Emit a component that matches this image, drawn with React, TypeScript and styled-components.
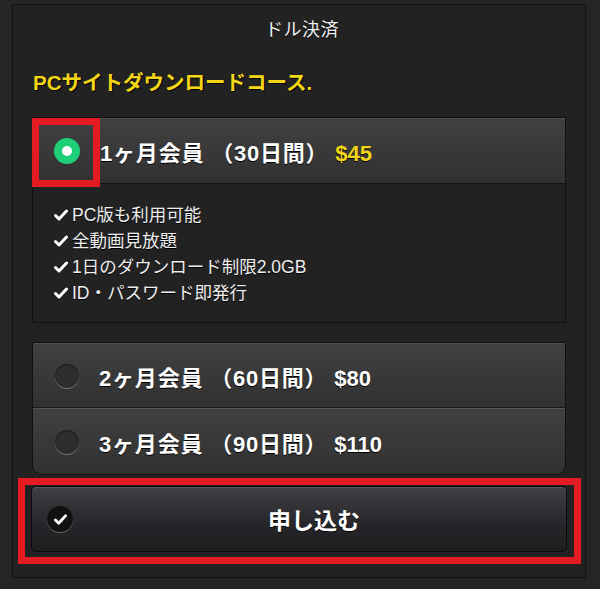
import React from "react";
import styled, { createGlobalStyle } from "styled-components";

const Global = createGlobalStyle`
  html, body { margin: 0; padding: 0; background: #252525; }
  body { font-family: "Liberation Sans", "Noto Sans CJK JP", sans-serif; }
`;

const Page = styled.div`
  width: 600px;
  height: 589px;
  padding: 4px 14px 0 12px;
  box-sizing: border-box;
`;

const Panel = styled.div`
  position: relative;
  height: 574px;
  box-sizing: border-box;
  border: 1px solid #121212;
  background: #222222;
  padding: 13px 19px 0 19px;
`;

const Title = styled.div`
  text-align: center;
  color: #eeeeee;
  font-size: 18px;
  line-height: 24px;
  letter-spacing: 0.5px;
  padding-left: 6px;
  text-shadow: 0 1px 0 #000;
`;

const Heading = styled.div`
  margin: 27px 0 0 1px;
  color: #f4d617;
  font-size: 20.5px;
  font-weight: bold;
  line-height: 28px;
  text-shadow: 1px 1px 0 #000;
`;

const Box = styled.div<{ $rounded?: boolean }>`
  margin-top: ${(p) => (p.$rounded ? "19px" : "20px")};
  border: 1px solid #111;
  border-radius: ${(p) => (p.$rounded ? "2px 2px 10px 10px" : "0")};
  overflow: hidden;
`;

const Row = styled.div<{ $h: number; $divider?: boolean }>`
  height: ${(p) => p.$h}px;
  box-sizing: border-box;
  display: flex;
  align-items: center;
  padding-left: 21px;
  gap: 20px;
  background: linear-gradient(#404040, #313131);
  border-top: 1px solid ${(p) => (p.$divider ? "#555" : "#505050")};
  box-shadow: ${(p) => (p.$divider ? "0 -1px 0 #1a1a1a" : "none")};
`;

const Label = styled.span`
  color: #ffffff;
  font-size: 22px;
  letter-spacing: 0.8px;
  font-weight: bold;
  text-shadow: 0 1px 0 #000;
  white-space: pre;
`;

const Price = styled.span<{ $hl?: boolean }>`
  color: ${(p) => (p.$hl ? "#f4d617" : "#ffffff")};
  letter-spacing: 0;
`;

const RadioOn = styled.span`
  width: 26px;
  height: 26px;
  border-radius: 50%;
  background: #1fcf78;
  display: flex;
  align-items: center;
  justify-content: center;
  flex: none;
  &::after {
    content: "";
    width: 10px;
    height: 10px;
    border-radius: 50%;
    background: #fff;
  }
`;

const RadioOff = styled.span`
  width: 24px;
  height: 24px;
  border-radius: 50%;
  background: #2e2e2e;
  box-shadow: inset 0 1px 2px rgba(0, 0, 0, 0.5), 0 1px 0 #777;
  flex: none;
  margin-left: 1px;
  margin-right: 0;
`;

const Features = styled.ul`
  list-style: none;
  margin: 0;
  padding: 18px 0 16px 21px;
  background: #222;
  border-top: 1px solid #111;
`;

const Feature = styled.li`
  display: flex;
  align-items: center;
  gap: 4px;
  color: #eeeeee;
  font-size: 17.5px;
  line-height: 26px;
  text-shadow: 0 1px 0 #000;
`;

const SubmitButton = styled.button`
  margin-top: 11px;
  width: 536px;
  height: 66px;
  margin-left: -1px;
  border: 1px solid #0a0a0a;
  border-radius: 5px;
  background: linear-gradient(#404044, #26262a 60%, #1e1e20);
  box-shadow: inset 0 1px 0 #5a5a5e;
  display: flex;
  align-items: center;
  padding: 0 0 0 15px;
  font-family: inherit;
  cursor: pointer;
`;

const CheckDot = styled.span`
  width: 26px;
  height: 26px;
  border-radius: 50%;
  background: #111;
  box-shadow: 0 1px 1px #666;
  display: flex;
  align-items: center;
  justify-content: center;
  flex: none;
`;

const ButtonText = styled.span`
  flex: 1;
  text-align: center;
  margin-right: 11px;
  color: #fff;
  font-size: 23px;
  font-weight: bold;
  text-shadow: 0 1px 0 #000;
`;

const Highlight = styled.div<{ $x: number; $y: number; $w: number; $h: number }>`
  position: absolute;
  left: ${(p) => p.$x}px;
  top: ${(p) => p.$y}px;
  width: ${(p) => p.$w}px;
  height: ${(p) => p.$h}px;
  box-sizing: border-box;
  border: 7px solid #e41b23;
  pointer-events: none;
`;

const Check = ({ size = 14 }: { size?: number }) => (
  <svg width={size} height={size} viewBox="0 0 14 14">
    <path d="M1.5 7.5 L5 11 L12.5 3" fill="none" stroke="#fff" strokeWidth="3" strokeLinecap="round" strokeLinejoin="round" />
  </svg>
);

const features = ["PC版も利用可能", "全動画見放題", "1日のダウンロード制限2.0GB", "ID・パスワード即発行"];

export default function App() {
  return (
    <>
      <Global />
      <Page>
        <Panel>
          <Title>ドル決済</Title>
          <Heading>PCサイトダウンロードコース.</Heading>
          <Box>
            <Row $h={65}>
              <RadioOn />
              <Label>
                1ヶ月会員 （30日間） <Price $hl>$45</Price>
              </Label>
            </Row>
            <Features>
              {features.map((f) => (
                <Feature key={f}>
                  <Check />
                  {f}
                </Feature>
              ))}
            </Features>
          </Box>
          <Box $rounded>
            <Row $h={65}>
              <RadioOff />
              <Label>
                2ヶ月会員 （60日間） <Price>$80</Price>
              </Label>
            </Row>
            <Row $h={66} $divider>
              <RadioOff />
              <Label>
                3ヶ月会員 （90日間） <Price>$110</Price>
              </Label>
            </Row>
          </Box>
          <SubmitButton>
            <CheckDot>
              <Check size={13} />
            </CheckDot>
            <ButtonText>申し込む</ButtonText>
          </SubmitButton>
          <Highlight $x={19} $y={113} $w={68} $h={69} />
          <Highlight $x={5} $y={473} $w={563} $h={86} />
        </Panel>
      </Page>
    </>
  );
}
